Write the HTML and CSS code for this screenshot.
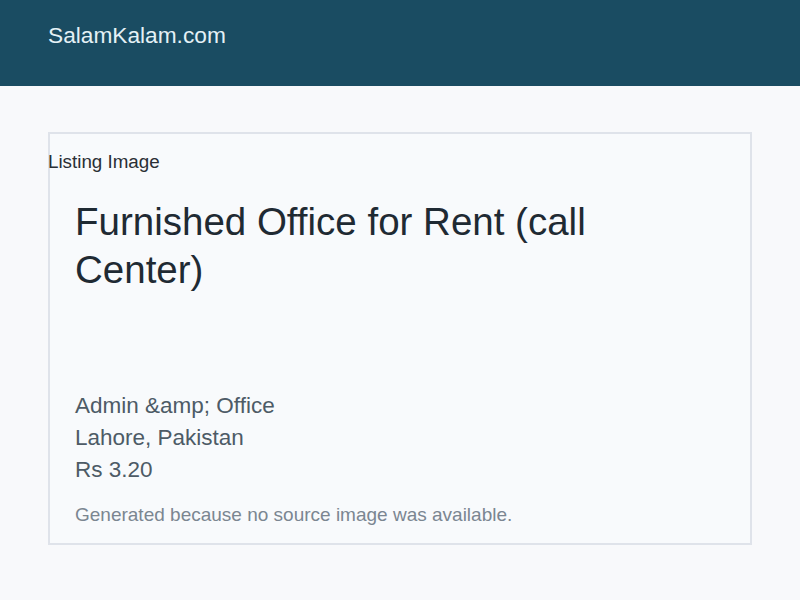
FILE: index.html
```html
<!DOCTYPE html>
<html lang="en">
<head>
  <meta charset="UTF-8">
  <title>Furnished Office for Rent (call Center) - SalamKalam.com</title>
  <link rel="stylesheet" href="styles.css">
</head>
<body>

  <header class="site-header">
    <div class="brand">SalamKalam.com</div>
  </header>

  <main class="page">
    <div class="listing-card">
      <span class="image-alt">Listing Image</span>
      <h1 class="listing-title">Furnished Office for Rent (call Center)</h1>
      <div class="listing-meta">
        <div>Admin &amp;amp; Office</div>
        <div>Lahore, Pakistan</div>
        <div>Rs 3.20</div>
      </div>
      <p class="listing-note">Generated because no source image was available.</p>
    </div>
  </main>

</body>
</html>
```

FILE: styles.css
```css
/* General Styles */
body {
  margin: 0;
  padding: 0;
  font-family: 'Liberation Sans', Arial, sans-serif;
  background: #f8f9fb;
  color: #1f2a33;
}

.site-header {
  height: 86px;
  background: #1a4c62;
  padding: 0 48px;
  box-sizing: border-box;
}

.brand {
  padding-top: 21px;
  font-size: 22.7px;
  line-height: 28px;
  color: #e4f1f6;
}

.page {
  padding: 46px 48px;
}

/* Listing card */
.listing-card {
  position: relative;
  height: 413px;
  box-sizing: border-box;
  border: 2px solid #dfe3ea;
  background: #f8fafc;
  padding: 64px 25px 0;
}

.image-alt {
  position: absolute;
  top: 17px;
  left: -2px;
  font-size: 18.8px;
  line-height: 22px;
  color: #2a2f35;
}

.listing-title {
  margin: 0;
  max-width: 620px;
  font-size: 38.5px;
  font-weight: 400;
  line-height: 48px;
  color: #1f2a33;
}

.listing-meta {
  margin-top: 96px;
  font-size: 22.5px;
  line-height: 32px;
  color: #4d5b66;
}

.listing-note {
  margin: 17px 0 0;
  font-size: 19px;
  line-height: 24px;
  color: #7b8691;
}
```
